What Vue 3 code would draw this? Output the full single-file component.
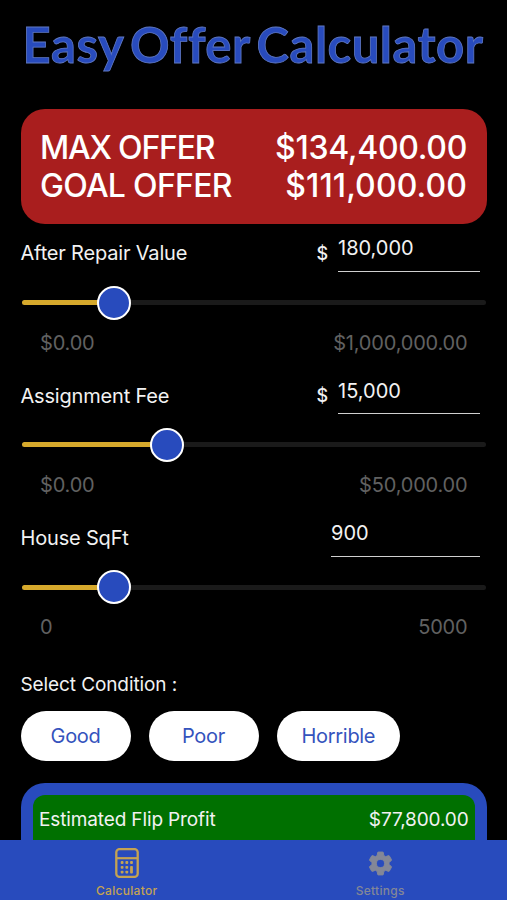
<script setup>
import { ref, computed } from 'vue';

const fields = ref([
  { name: 'After Repair Value', key: 'arv', prefix: '$', value: '180,000', max: 1000000, low: '$0.00', high: '$1,000,000.00' },
  { name: 'Assignment Fee', key: 'fee', prefix: '$', value: '15,000', max: 50000, low: '$0.00', high: '$50,000.00' },
  { name: 'House SqFt', key: 'sqft', prefix: '', value: '900', max: 5000, low: '0', high: '5000' }
]);

const conditions = ['Good', 'Poor', 'Horrible'];
const selected = ref('');

// Thumb centre for each slider, in px from the left end of the track
const thumbs = computed(() =>
  fields.value.map((field) => {
    const amount = Number(field.value.replace(/,/g, '')) || 0;
    return 14.2 + Math.min(amount / field.max, 1) * 437;
  })
);
</script>

<template>
  <div class="screen">
    <main class="content">
      <h1>Easy Offer Calculator</h1>

      <section class="offers">
        <div class="offer-row">
          <span class="max-label">MAX OFFER</span>
          <span class="max-value">$134,400.00</span>
        </div>
        <div class="offer-row">
          <span class="goal-label">GOAL OFFER</span>
          <span class="goal-value">$111,000.00</span>
        </div>
      </section>

      <section v-for="(field, i) in fields" :key="field.key" class="field">
        <div class="field-row">
          <label :for="field.key">{{ field.name }}</label>
          <span v-if="field.prefix" class="prefix">{{ field.prefix }}</span>
          <input :id="field.key" v-model="field.value" :class="{ wide: !field.prefix }" />
        </div>
        <div class="slider">
          <div class="track">
            <div class="fill" :style="{ width: thumbs[i] + 'px' }"></div>
          </div>
          <div class="thumb" :style="{ left: thumbs[i] + 'px' }"></div>
        </div>
        <div class="range">
          <span>{{ field.low }}</span>
          <span>{{ field.high }}</span>
        </div>
      </section>

      <p class="condition-label">Select Condition :</p>
      <div class="conditions">
        <button v-for="item in conditions" :key="item" @click="selected = item">{{ item }}</button>
      </div>

      <section class="results">
        <div class="profit">
          <span>Estimated Flip Profit</span>
          <span>$77,800.00</span>
        </div>
      </section>
    </main>

    <nav class="tabs">
      <a class="tab active">
        <svg class="calc-icon" viewBox="0 0 24 30" width="24" height="30">
          <rect x="1.3" y="1.1" width="21.4" height="27.8" rx="3.2" fill="none" stroke="currentColor" stroke-width="2.3" />
          <path d="M1.5 10.2h21" stroke="currentColor" stroke-width="2.2" />
          <g fill="currentColor">
            <rect x="5.7" y="13.1" width="2.8" height="2.8" rx="0.9" />
            <rect x="10.4" y="13.1" width="2.8" height="2.8" rx="0.9" />
            <rect x="15.1" y="13.1" width="2.8" height="2.8" rx="0.9" />
            <rect x="5.7" y="17.9" width="2.8" height="2.8" rx="0.9" />
            <rect x="10.4" y="17.9" width="2.8" height="2.8" rx="0.9" />
            <rect x="5.7" y="22.7" width="2.8" height="2.8" rx="0.9" />
            <rect x="10.4" y="22.7" width="2.8" height="2.8" rx="0.9" />
            <rect x="15.1" y="17.9" width="2.8" height="7.6" rx="0.9" />
          </g>
        </svg>
        <span>Calculator</span>
      </a>
      <a class="tab">
        <svg class="gear-icon" viewBox="1.5 1.5 21 21" width="25" height="25">
          <path
            fill="currentColor"
            stroke="currentColor"
            stroke-width="0.8"
            stroke-linejoin="round"
            d="M19.14 12.94c.04-.3.06-.61.06-.94s-.02-.64-.07-.94l2.03-1.58a.49.49 0 0 0 .12-.61l-1.92-3.32a.49.49 0 0 0-.59-.22l-2.39.96a7 7 0 0 0-1.62-.94l-.36-2.54a.48.48 0 0 0-.48-.41h-3.84a.47.47 0 0 0-.47.41l-.36 2.54c-.59.24-1.13.57-1.62.94l-2.39-.96a.48.48 0 0 0-.59.22L2.74 8.87a.47.47 0 0 0 .12.61l2.03 1.58c-.05.3-.09.63-.09.94s.02.64.07.94l-2.03 1.58a.49.49 0 0 0-.12.61l1.92 3.32c.12.22.37.29.59.22l2.39-.96c.5.38 1.03.7 1.62.94l.36 2.54c.05.24.24.41.48.41h3.84c.24 0 .44-.17.47-.41l.36-2.54a7 7 0 0 0 1.62-.94l2.39.96c.22.08.47 0 .59-.22l1.92-3.32a.47.47 0 0 0-.12-.61zM12 15.4a3.4 3.4 0 1 1 0-6.8 3.4 3.4 0 0 1 0 6.8z"
          />
        </svg>
        <span>Settings</span>
      </a>
    </nav>
  </div>
</template>

<style>
body {
  margin: 0;
  background: #000;
}
</style>

<style scoped>
.screen {
  display: flex;
  flex-direction: column;
  height: 900px;
  overflow: hidden;
  background: #000;
  color: #f2f2f2;
  font-family: Inter, 'Liberation Sans', sans-serif;
  font-size: 20px;
  letter-spacing: -0.18px;
}
.content {
  flex: 1;
  min-height: 0;
  padding: 0 20px 0 20.5px;
  overflow: hidden;
}
h1 {
  margin: 0 -18.5px 0 -20px;
  height: 108.5px;
  padding-top: 14px;
  box-sizing: border-box;
  color: #284bbd;
  font-family: Lato, 'Open Sans', sans-serif;
  font-size: 49px;
  font-weight: 700;
  line-height: 60px;
  letter-spacing: 0.5px;
  word-spacing: -5.5px;
  text-align: center;
  white-space: nowrap;
  -webkit-text-stroke: 0.8px #5f78c2;
}
.offers {
  height: 115px;
  box-sizing: border-box;
  padding: 20px 20px 0 19.5px;
  border-radius: 24px;
  background: #a91e1e;
  color: #fff;
}
.offer-row {
  display: flex;
  justify-content: space-between;
  font-size: 32px;
  font-weight: 500;
  line-height: 38px;
}
.max-label {
  letter-spacing: -1.2px;
}
.goal-label {
  letter-spacing: -0.7px;
}
.max-value {
  letter-spacing: -0.3px;
}
.goal-value {
  letter-spacing: 0.1px;
}
.field {
  height: 142.4px;
}
.field-row {
  display: flex;
  align-items: flex-start;
  height: 48px;
}
label {
  flex: 1;
  padding-top: 17.7px;
  line-height: 24px;
}
.prefix {
  padding-top: 18px;
  margin-right: 10px;
  font-size: 18px;
  font-weight: 500;
  line-height: 24px;
}
input {
  width: 142px;
  height: 35px;
  margin: 13.3px 7px 0 0;
  padding: 0 0 11px;
  box-sizing: border-box;
  border: 0;
  border-bottom: 1.5px solid #d0d0d0;
  outline: 0;
  background: transparent;
  color: inherit;
  font: inherit;
}
input.wide {
  width: 149px;
}
.slider {
  position: relative;
  display: flex;
  align-items: center;
  height: 34px;
  margin: 14px 0 0 1px;
}
.track {
  width: 464px;
  height: 5px;
  border-radius: 3px;
  background: #1a1a1a;
}
.fill {
  height: 5px;
  border-radius: 3px;
  background: #d6a92c;
}
.thumb {
  position: absolute;
  top: 0;
  width: 34px;
  height: 34px;
  box-sizing: border-box;
  margin-left: -17px;
  border: 2px solid #fff;
  border-radius: 50%;
  background: #284bbd;
}
.range {
  display: flex;
  justify-content: space-between;
  padding: 11.2px 19.5px 0;
  color: #616161;
  line-height: 24px;
}
.condition-label {
  margin: 22.6px 0 13.4px;
  font-size: 19px;
  line-height: 24px;
  letter-spacing: -0.1px;
}
.conditions {
  display: flex;
  gap: 18px;
}
button {
  min-width: 110px;
  height: 50px;
  padding: 0 25px;
  border: 0;
  border-radius: 25px;
  background: #fff;
  color: #3453bd;
  font: inherit;
  letter-spacing: -0.3px;
}
.results {
  height: 100px;
  margin-top: 22px;
  padding: 12px;
  box-sizing: border-box;
  border-radius: 24px 24px 0 0;
  background: #284bbd;
}
.profit {
  display: flex;
  justify-content: space-between;
  height: 88px;
  padding: 13px 6.5px 0;
  box-sizing: border-box;
  border-radius: 12px 12px 0 0;
  background: #007000;
  font-size: 19px;
  line-height: 24px;
  letter-spacing: -0.13px;
}
.tabs {
  display: flex;
  flex: none;
  height: 60px;
  background: #284bbd;
}
.tab {
  display: flex;
  flex: 1;
  flex-direction: column;
  align-items: center;
  color: #838797;
  font-size: 12px;
  font-weight: 500;
  line-height: 16px;
  letter-spacing: 0.3px;
}
.tab.active {
  color: #c5a352;
}
.calc-icon {
  margin: 8px 0 5px;
}
.gear-icon {
  margin: 11px 0 7px;
}
</style>
